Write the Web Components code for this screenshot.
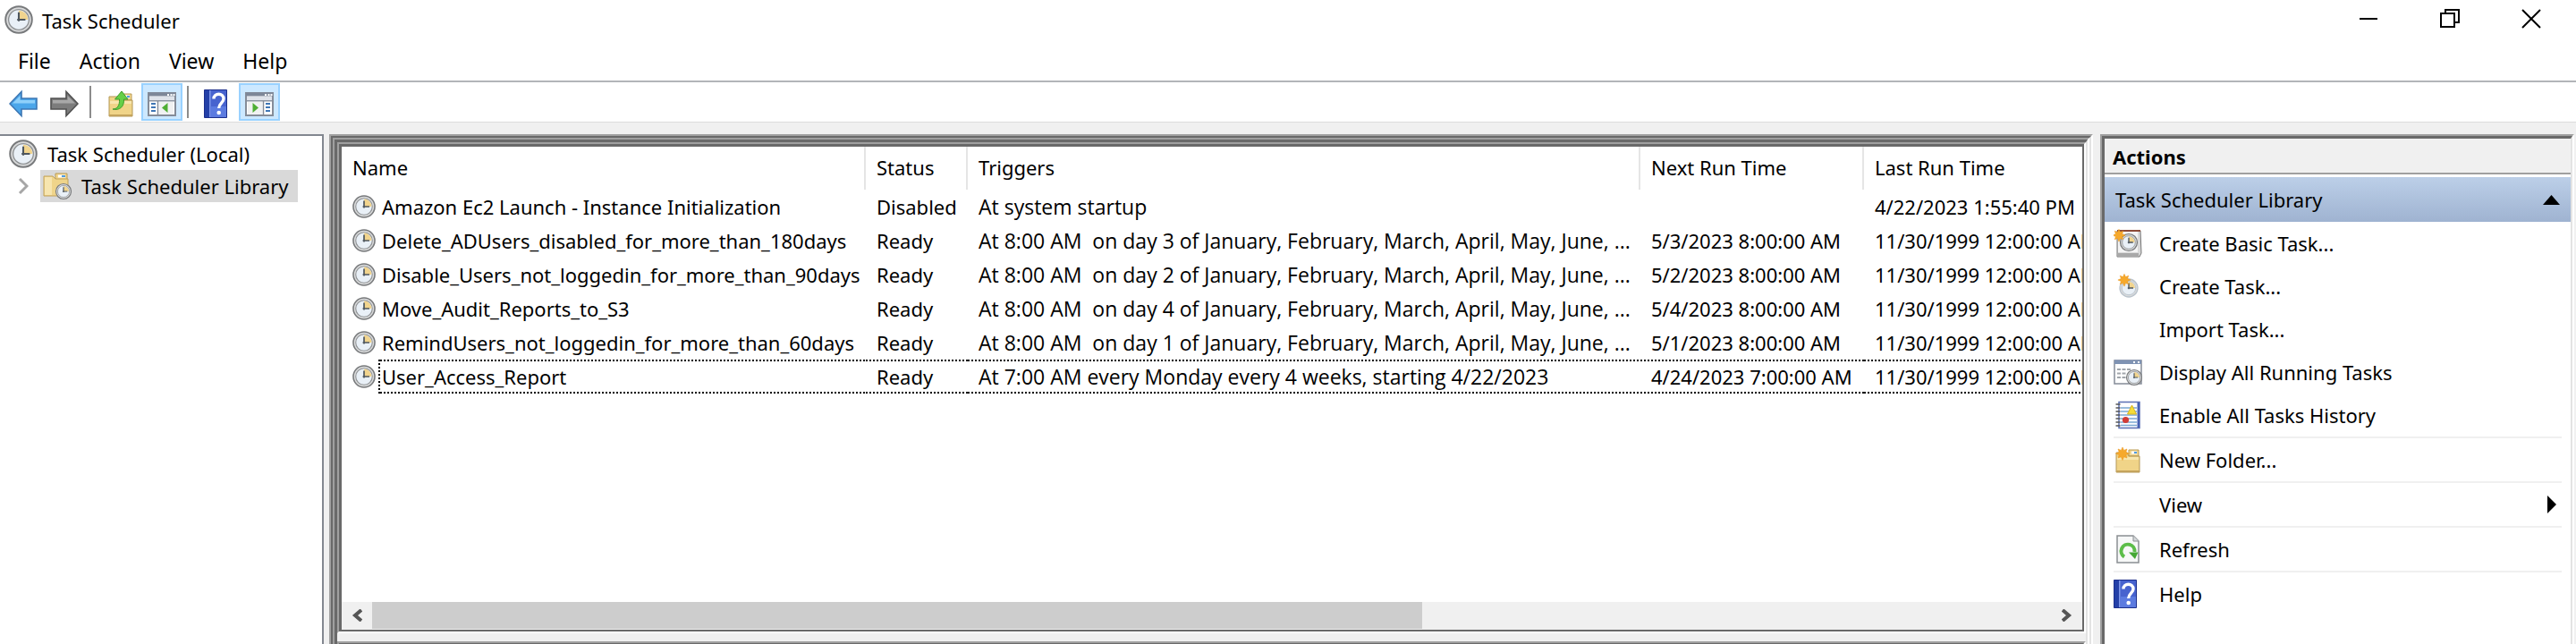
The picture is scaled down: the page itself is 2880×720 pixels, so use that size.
<!DOCTYPE html>
<html lang="en">
<head>
<meta charset="utf-8">
<title>Task Scheduler</title>
<style>
  html, body { margin: 0; height: 100%; }
  body { font: 22px/30px "Noto Sans", "Open Sans", sans-serif; color: #000; background: #fff; overflow: hidden; }
</style>
</head>
<body>
<scheduler-window></scheduler-window>

<script>
const define = (name, html, setup) => {
  const template = document.createElement('template');
  template.innerHTML = html;
  customElements.define(name, class extends HTMLElement {
    connectedCallback() {
      if (this.shadowRoot) return;
      const content = template.content.cloneNode(true);
      if (setup) setup(this, content);
      this.attachShadow({ mode: 'open' }).append(content);
    }
  });
};

const BUTTON_RESET = `button { font: inherit; color: inherit; background: none; border: 0; padding: 0; margin: 0; text-align: left; }`;

/* ---------- icons ---------- */
const clockFace = (cx, cy, r) => `
  <circle cx="${cx}" cy="${cy}" r="${r}" fill="#d9dadb" stroke="#77797b" stroke-width="${r * .13}"/>
  <circle cx="${cx}" cy="${cy}" r="${r * .77}" fill="#e9f0f7" stroke="#8f9294" stroke-width="${r * .09}"/>
  <path d="M${cx} ${cy}V${cy - r * .7}A${r * .7} ${r * .7} 0 0 1 ${cx + r * .7} ${cy}Z" fill="#f1d48e"/>
  <path d="M${cx} ${cy - r * .55}V${cy + r * .12}M${cx - r * .12} ${cy}H${cx + r * .5}" fill="none" stroke="#4d565e" stroke-width="${r * .14}"/>`;
const spark = (x, y, s) => `<path transform="translate(${x} ${y}) scale(${s})" d="M0-7 1.6-3.6 5-5 3.8-1.5 7.5 0 3.8 1.6 5 5 1.6 3.8 0 7.5-1.6 3.8-5 5-3.8 1.6-7.5 0-3.8-1.5-5-5-1.6-3.6Z" fill="#f6a92c" stroke="#e8921a" stroke-width=".5"/>`;
const folder = `
  <path d="M17 5h11v7H17z" fill="#f1d68f" stroke="#b99a55"/>
  <path d="M20 6.500h6v3h-6z" fill="#fff"/><path d="M23 7h3v2h-3z" fill="#4f9be0"/>
  <path d="M3 8h12l2 4h12v18H3z" fill="#f0d488" stroke="#b39757"/>
  <path d="M4 13h24v3H4z" fill="#f8e6ae"/><path d="M3 28h26v2H3z" fill="#c4a35c"/>`;
const book = `
  <path d="M.5 .5h25v31H.5z" fill="#4763cf" stroke="#1c2f8c"/>
  <path d="M1 1h5v30H1z" fill="#2440a8"/><path d="M6 1h1.500v30H6z" fill="#7f97ea"/>
  <path d="M7.500 19H25v12H7.500z" fill="#5c7be0"/>
  <path d="M11 10.500C11 3.500 22 3.500 22 10.500 22 15 16.700 15.500 16.700 21" fill="none" stroke="#fff" stroke-width="3.400"/>
  <circle cx="16.700" cy="26" r="2.300" fill="#fff"/>`;
const paneFrame = `
  <path d="M1 4h30v25H1z" fill="#fff" stroke="#858c98" stroke-width="2"/>
  <path d="M1 3.500h30v4H1z" fill="#7d8798"/><path d="M22 5h2v2h-2zM25.500 5h2v2h-2zM28.500 5h2v2h-2z" fill="#fff"/>
  <path d="M2 8h28v4H2z" fill="#dfe3ea"/><path d="M2 12h28v1.500H2z" fill="#8c94a2"/>`;
const ICONS = {
  clock: clockFace(16, 16, 14.8),
  back: `<path d="M1 16 14 2.500V10h17v12H14v7.500Z" fill="#4ba6ea" stroke="#3d77b4" stroke-width="1.600"/><path d="M4 15.500 12.500 7v5H29v3.500z" fill="#8fd0fa"/>`,
  forward: `<path d="M31 16 18 2.500V10H1v12h17v7.500Z" fill="#7c7c7c" stroke="#505050" stroke-width="1.600"/><path d="M28 15.500 19.500 7v5H3v3.500z" fill="#a8a8a8"/>`,
  up: folder + `<path d="M7 22c5 0 8-4 7.500-11H9.500L17 2l7 9h-4.500C20 19 15 24 7 22Z" fill="#65cf47" stroke="#3d9c2b"/>`,
  tree: paneFrame + `<path d="M11.500 13v15" stroke="#858c98" stroke-width="1.500"/><path d="M4 16h5M4 20h5M4 24h5" stroke="#3f76b5" stroke-width="1.800"/><path d="M13 14h16v14H13z" fill="#f0f1f2"/><path d="M22.500 15v11L16 20.500z" fill="#4fae35"/>`,
  actions: paneFrame + `<path d="M20.500 13v15" stroke="#858c98" stroke-width="1.500"/><path d="M23 16h5M23 20h5M23 24h5" stroke="#3f76b5" stroke-width="1.800"/><path d="M3 14h16v14H3z" fill="#f0f1f2"/><path d="M8.500 15v11l6.500-5.500z" fill="#4fae35"/>`,
  help: book,
  library: `<path d="M14 2h13v7H14z" fill="#f1d68f" stroke="#b99a55"/><path d="M17 3.500h8v3h-8z" fill="#fff"/><path d="M21 4h4v2h-4z" fill="#4f9be0"/>
    <path d="M1 5h10l3 3h14v19H1z" fill="#efd48a" stroke="#c2a25a"/><path d="M2 6h8v20H2z" fill="#f7e5af"/>` + clockFace(23, 22, 8.5),
  basic: `<path d="M4 2h26l1 25-2 4H4z" fill="#d9d9d9" stroke="#757575"/><path d="M4 1h26v2H4z" fill="#8c4a38"/><path d="M5 3h22v23H5z" fill="#f4f4f4"/><path d="M4 27h24v3.500H4z" fill="#a9a9a9"/>` + clockFace(17, 15, 9.5) + spark(6, 7, .95),
  create: clockFace(17, 18, 10).replace(/#77797b|#8f9294/g, '#b9c3cc') + spark(12, 9, .95),
  running: `<path d="M1 3h30v26H1z" fill="#fff" stroke="#858c98" stroke-width="1.500"/><path d="M1 2.500h30v4.500H1z" fill="#7f93b3"/><path d="M22 4h2v2h-2zM27 4h2v2h-2z" fill="#fff"/>
    <path d="M4 13h15M4 17.500h11M4 22h11" stroke="#a1a6ab" stroke-width="1.800" stroke-dasharray="4 1.500"/>` + clockFace(23, 22, 8.5),
  history: `<path d="M6 1.500h23v29H6z" fill="#fdfdff" stroke="#5b70b4" stroke-width="1.500"/><path d="M26.500 2v28h2.500V2z" fill="#4661b4"/>
    <path d="M8 8h18M8 12h18M8 16h18M8 20h18M8 24h18M8 27.500h18" stroke="#79a8d2" stroke-width="1.300"/>
    <path d="M2.500 4h5M2.500 8h5M2.500 12h5M2.500 16h5M2.500 20h5M2.500 24h5M2.500 28h5" stroke="#555" stroke-width="1.600"/>
    <path d="m20.500 5 5 10h-10z" fill="#f6dc38" stroke="#d9b520"/><circle cx="13.500" cy="21.500" r="3.600" fill="#d23b35"/>`,
  newfolder: folder + spark(10, 9, 1),
  refresh: `<path d="M4 1h18l6 6v24H4z" fill="#f7f8f8" stroke="#8b8f92" stroke-width="1.500"/><path d="M22 1v6h6" fill="#d4d8da" stroke="#8b8f92"/>
    <path d="M12 24.500A7.500 7.500 0 1 1 23.500 19" fill="none" stroke="#5cbd49" stroke-width="4"/><path d="M17 19.500h10.500L24 27z" fill="#45a835"/>`,
  none: ''
};
define('ts-icon', `<style>
    :host { display: block; flex: none; width: var(--icon-size, 32px); height: var(--icon-size, 32px); }
    svg { display: block; width: 100%; height: 100%; }
  </style><svg viewBox="0 0 32 32" aria-hidden="true"></svg>`,
  (host, root) => { root.querySelector('svg').innerHTML = ICONS[host.getAttribute('name')]; });

/* ---------- title bar ---------- */
define('title-bar', `<style>
    :host { display: flex; align-items: center; height: 46px; padding: 0 5px; }
    h1 { flex: 1; margin: 0 0 0 10px; font: inherit; }
    ts-icon { margin-bottom: 2px; }
    ${BUTTON_RESET}
    button { display: grid; place-items: center; width: 91px; height: 46px; padding-bottom: 4px; }
    svg { width: 22px; height: 22px; fill: none; stroke: #000; stroke-width: 2; }
  </style>
  <ts-icon name="clock"></ts-icon><h1><slot></slot></h1>
  <button aria-label="Minimize"><svg viewBox="0 0 22 22"><path d="M1 11h20"/></svg></button>
  <button aria-label="Restore"><svg viewBox="0 0 22 22"><path d="M1 5h15v15H1zM6 5V1h15v14h-5"/></svg></button>
  <button aria-label="Close"><svg viewBox="0 0 22 22"><path d="m1 1 20 20M21 1 1 21"/></svg></button>`);

define('menu-bar', `<style>
    :host { display: block; padding: 0 8px; height: 44px; border-bottom: 2px solid #b2b5b9; font-size: 23px; }
    nav { display: flex; gap: 8px; }
    ${BUTTON_RESET}
    button { padding: 6px 12px; height: 44px; }
  </style>
  <nav><button>File</button><button>Action</button><button>View</button><button>Help</button></nav>`);

define('tool-bar', `<style>
    :host { display: flex; align-items: center; height: 44px; padding-left: 3px; border-bottom: 1px solid #dcdcdc; }
    ${BUTTON_RESET}
    button { display: grid; place-items: center; box-sizing: border-box; width: 46px; height: 42px; padding-top: 4px; }
    button[aria-pressed] { background: #cce8ff; border: 2px solid #99d1ff; }
    i { width: 2px; height: 36px; margin: 0 10px 0 5px; background: #8c8c8c; }
  </style>
  <button aria-label="Back"><ts-icon name="back"></ts-icon></button>
  <button aria-label="Forward"><ts-icon name="forward"></ts-icon></button>
  <i></i>
  <button aria-label="Up one level"><ts-icon name="up"></ts-icon></button>
  <button aria-label="Show console tree" aria-pressed="true"><ts-icon name="tree"></ts-icon></button>
  <i></i>
  <button aria-label="Help"><ts-icon name="help"></ts-icon></button>
  <button aria-label="Show action pane" aria-pressed="true"><ts-icon name="actions"></ts-icon></button>`);

/* ---------- console tree ---------- */
define('console-tree', `<style>
    :host { display: block; box-sizing: border-box; background: #fff; border: solid #828790; border-width: 2px 2px 0 0; padding-top: 2px; }
    ul { list-style: none; margin: 0; padding: 0; }
    .row { display: flex; align-items: center; height: 36px; padding-left: 10px; }
    .label { margin-left: 11px; white-space: nowrap; }
    .chevron { width: 12px; height: 20px; margin: 0 13px 0 10px; fill: none; stroke: #a6a6a6; stroke-width: 3; }
    .selected { display: flex; align-items: center; height: 36px; padding: 0 10px 0 3px; background: #d9d9d9; }
  </style>
  <ul>
    <li><div class="row"><ts-icon name="clock"></ts-icon><span class="label">Task Scheduler (Local)</span></div>
      <ul><li class="row"><svg class="chevron" viewBox="0 0 12 20"><path d="m2 2 8 8-8 8"/></svg>
        <span class="selected"><ts-icon name="library"></ts-icon><span class="label">Task Scheduler Library</span></span></li></ul>
    </li>
  </ul>`);

/* Sunken 3D edge: dark on the top and left, light on the right and bottom. */
define('sunken-edge', `<style>
    :host { display: flex; box-sizing: border-box; min-width: 0; min-height: 0; border: 2px solid; border-color: #a0a0a0 #fff #fff #a0a0a0; }
    div { display: flex; flex-direction: column; flex: 1; box-sizing: border-box; min-width: 0; border: solid; border-width: 3px 2px 2px 3px; border-color: #696969 #e3e3e3 #e3e3e3 #696969; }
    :host([thin]) div { border-width: 2px; }
    :host([open-end]), :host([open-end]) div { border-bottom: 0; }
    :host([list]) div { border-color: #696969; }
  </style><div><slot></slot></div>`);

/* ---------- task list ---------- */
const onDay = n => `At 8:00 AM  on day ${n} of January, February, March, April, May, June, ...`;
const NEVER = '11/30/1999 12:00:00 AM';
const TASKS = [
  ['Amazon Ec2 Launch - Instance Initialization', 'Disabled', 'At system startup', '', '4/22/2023 1:55:40 PM'],
  ['Delete_ADUsers_disabled_for_more_than_180days', 'Ready', onDay(3), '5/3/2023 8:00:00 AM', NEVER],
  ['Disable_Users_not_loggedin_for_more_than_90days', 'Ready', onDay(2), '5/2/2023 8:00:00 AM', NEVER],
  ['Move_Audit_Reports_to_S3', 'Ready', onDay(4), '5/4/2023 8:00:00 AM', NEVER],
  ['RemindUsers_not_loggedin_for_more_than_60days', 'Ready', onDay(1), '5/1/2023 8:00:00 AM', NEVER],
  ['User_Access_Report', 'Ready', 'At 7:00 AM every Monday every 4 weeks, starting 4/22/2023', '4/24/2023 7:00:00 AM', NEVER]
];
define('task-list', `<style>
    :host { display: block; flex: 1; min-height: 0; background: #fff; overflow: hidden; --icon-size: 26px; }
    table { width: 100%; table-layout: fixed; border-collapse: separate; border-spacing: 0; white-space: pre; }
    th, td { padding: 0 0 0 12px; font-weight: normal; text-align: left; overflow: hidden; }
    th { height: 48px; padding-bottom: 2px; border-right: 2px solid #e5e5e5; box-sizing: border-box; }
    th:last-child { border: 0; }
    td { height: 38px; }
    .name { width: 586px; } .status { width: 114px; } .triggers { width: 752px; } .next { width: 250px; }
    td:nth-child(3) { font: 23px/30px "Open Sans", "Noto Sans", sans-serif; }
    td:first-child div { display: flex; align-items: center; height: 38px; }
    td:first-child span { flex: 1; margin-left: 3px; padding-left: 2px; line-height: 38px; border-left: 2px dotted transparent; }
    .focused td:not(:first-child), .focused span {
      background: repeating-linear-gradient(90deg, #000 0 2px, #fff 2px 4px) top / 100% 2px no-repeat,
        repeating-linear-gradient(90deg, #000 0 2px, #fff 2px 4px) bottom / 100% 2px no-repeat;
    }
    .focused td:first-child span { border-left-color: #000; }
  </style>
  <table>
    <colgroup><col class="name"><col class="status"><col class="triggers"><col class="next"><col></colgroup>
    <thead><tr><th>Name</th><th>Status</th><th>Triggers</th><th>Next Run Time</th><th>Last Run Time</th></tr></thead>
    <tbody></tbody>
  </table>`,
  (host, root) => {
    root.querySelector('tbody').innerHTML = TASKS.map(([name, ...rest], i) =>
      `<tr${i === 5 ? ' class="focused"' : ''}><td><div><ts-icon name="clock"></ts-icon><span>${name}</span></div></td>${rest.map(t => `<td>${t}</td>`).join('')}</tr>`).join('');
  });

define('scroll-strip', `<style>
    :host { display: flex; height: 30px; margin-bottom: 1px; background: #f0f0f0; }
    ${BUTTON_RESET}
    button { display: grid; place-items: center; width: 34px; }
    .track { flex: 1; } .thumb { width: 62.500%; height: 100%; background: #cdcdcd; }
    svg { width: 12px; height: 14px; fill: none; stroke: #555; stroke-width: 4; }
  </style>
  <button aria-label="Scroll left"><svg viewBox="0 0 12 14"><path d="M11 1 4 7l7 6"/></svg></button>
  <div class="track"><div class="thumb"></div></div>
  <button aria-label="Scroll right"><svg viewBox="0 0 12 14"><path d="m1 1 7 6-7 6"/></svg></button>`);

/* ---------- actions pane ---------- */
define('action-item', `<style>
    :host { display: block; padding: 0 10px; }
    ${BUTTON_RESET}
    button { display: flex; align-items: center; width: 100%; height: 48px; }
    :host([divided]) { height: 50px; }
    :host([divided])::before { content: ""; display: block; height: 2px; background: #f0f0f0; }
    span { flex: 1; margin-left: 19px; }
    svg { display: none; width: 10px; height: 20px; margin-right: 6px; }
    :host([submenu]) svg { display: block; }
  </style><button><ts-icon></ts-icon><span><slot></slot></span><svg viewBox="0 0 10 20"><path d="M0 0v20l10-10z"/></svg></button>`,
  (host, root) => {
    root.querySelector('ts-icon').setAttribute('name', host.getAttribute('icon') || 'none');
  });

define('actions-pane', `<style>
    :host { display: block; flex: 1; background: #fff; }
    h2 { margin: 0; height: 38px; padding-left: 9px; font: bold 22px/40px "Noto Sans", "Open Sans", sans-serif; background: #f0f0f0; border-bottom: 2px solid #a0a0a0; }
    ${BUTTON_RESET}
    .group { display: flex; align-items: center; justify-content: space-between; width: 100%; height: 50px; margin-top: 3px; padding: 0 12px; background: linear-gradient(#bccfe8, #9fb3d1); }
    .group svg { width: 19px; height: 11px; }
  </style>
  <h2>Actions</h2>
  <button class="group"><span>Task Scheduler Library</span><svg viewBox="0 0 19 11"><path d="M9.500 0 19 11H0z"/></svg></button>
  <action-item icon="basic">Create Basic Task...</action-item>
  <action-item icon="create">Create Task...</action-item>
  <action-item>Import Task...</action-item>
  <action-item icon="running">Display All Running Tasks</action-item>
  <action-item icon="history">Enable All Tasks History</action-item>
  <action-item icon="newfolder" divided>New Folder...</action-item>
  <action-item submenu divided>View</action-item>
  <action-item icon="refresh" divided>Refresh</action-item>
  <action-item icon="help" divided>Help</action-item>`);

define('scheduler-window', `<style>
    :host { display: flex; flex-direction: column; height: 100vh; }
    main { flex: 1; min-height: 0; display: grid; grid-template-columns: 362px minmax(0, 1fr) 530px; padding: 13px 2px 0 0; background: #f0f0f0; }
    .center { margin: 0 8px 0 6px; }
    .center > sunken-edge { flex: 1; }
    .list { flex: 1; margin-bottom: 9px; }
    .detail { flex: none; height: 3px; overflow: hidden; }
  </style>
  <title-bar>Task Scheduler</title-bar>
  <menu-bar></menu-bar>
  <tool-bar></tool-bar>
  <main>
    <console-tree></console-tree>
    <sunken-edge class="center" thin open-end><sunken-edge open-end>
      <sunken-edge class="list" list><task-list></task-list><scroll-strip></scroll-strip></sunken-edge>
      <sunken-edge class="detail" open-end></sunken-edge>
    </sunken-edge></sunken-edge>
    <sunken-edge open-end><actions-pane></actions-pane></sunken-edge>
  </main>`);
</script>
</body>
</html>
